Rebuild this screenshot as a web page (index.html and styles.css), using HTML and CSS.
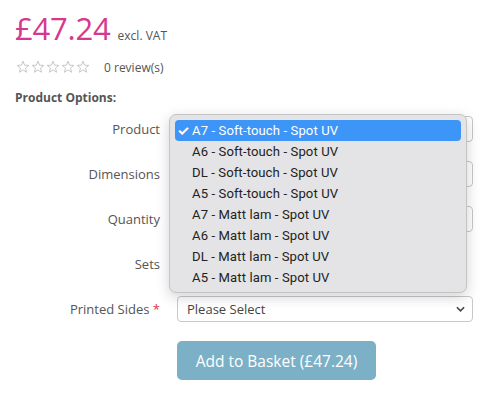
FILE: index.html
```html
<!DOCTYPE html>
<html>
<head>
<meta charset="utf-8">
<link rel="stylesheet" href="styles.css">
</head>
<body>
<div class="page">
  <div class="price-line">
    <span class="price">£47.24</span>
    <span class="vat">excl. VAT</span>
  </div>
  <div class="rating">
    <span class="stars">
      <svg viewBox="0 0 14 14" class="star"><path d="M7 1.2 8.6 5.2 12.8 5.4 9.5 8.1 10.6 12.3 7 9.9 3.4 12.3 4.5 8.1 1.2 5.4 5.4 5.2Z"/></svg>
      <svg viewBox="0 0 14 14" class="star"><path d="M7 1.2 8.6 5.2 12.8 5.4 9.5 8.1 10.6 12.3 7 9.9 3.4 12.3 4.5 8.1 1.2 5.4 5.4 5.2Z"/></svg>
      <svg viewBox="0 0 14 14" class="star"><path d="M7 1.2 8.6 5.2 12.8 5.4 9.5 8.1 10.6 12.3 7 9.9 3.4 12.3 4.5 8.1 1.2 5.4 5.4 5.2Z"/></svg>
      <svg viewBox="0 0 14 14" class="star"><path d="M7 1.2 8.6 5.2 12.8 5.4 9.5 8.1 10.6 12.3 7 9.9 3.4 12.3 4.5 8.1 1.2 5.4 5.4 5.2Z"/></svg>
      <svg viewBox="0 0 14 14" class="star"><path d="M7 1.2 8.6 5.2 12.8 5.4 9.5 8.1 10.6 12.3 7 9.9 3.4 12.3 4.5 8.1 1.2 5.4 5.4 5.2Z"/></svg>
    </span>
    <span class="reviews">0 review(s)</span>
  </div>
  <div class="options-title">Product Options:</div>
  <div class="form">
    <div class="row">
      <label class="label">Product</label>
      <div class="select"><span></span><svg class="chev" viewBox="0 0 10 6"><path d="M1 1 5 5 9 1"/></svg></div>
    </div>
    <div class="row">
      <label class="label">Dimensions</label>
      <div class="select"><span></span><svg class="chev" viewBox="0 0 10 6"><path d="M1 1 5 5 9 1"/></svg></div>
    </div>
    <div class="row">
      <label class="label">Quantity</label>
      <div class="select"><span></span><svg class="chev" viewBox="0 0 10 6"><path d="M1 1 5 5 9 1"/></svg></div>
    </div>
    <div class="row">
      <label class="label">Sets</label>
      <div class="input-small"></div>
    </div>
    <div class="row">
      <label class="label">Printed Sides <span class="req">*</span></label>
      <div class="select"><span>Please Select</span><svg class="chev" viewBox="0 0 10 6"><path d="M1 1 5 5 9 1"/></svg></div>
    </div>
    <div class="row button-row">
      <span></span>
      <button class="basket">Add to Basket (£47.24)</button>
    </div>
    <div class="popup">
      <div class="opt selected"><span class="check">✓</span>A7 - Soft-touch - Spot UV</div>
      <div class="opt"><span class="check"></span>A6 - Soft-touch - Spot UV</div>
      <div class="opt"><span class="check"></span>DL - Soft-touch - Spot UV</div>
      <div class="opt"><span class="check"></span>A5 - Soft-touch - Spot UV</div>
      <div class="opt"><span class="check"></span>A7 - Matt lam - Spot UV</div>
      <div class="opt"><span class="check"></span>A6 - Matt lam - Spot UV</div>
      <div class="opt"><span class="check"></span>DL - Matt lam - Spot UV</div>
      <div class="opt"><span class="check"></span>A5 - Matt lam - Spot UV</div>
    </div>
  </div>
</div>
</body>
</html>
```
FILE: styles.css
```css
* { box-sizing: border-box; }
html, body { margin: 0; padding: 0; background: #fff; }
body {
  font-family: "Open Sans", "Liberation Sans", sans-serif;
  color: #555;
  font-size: 13px;
}
.page {
  width: 492px;
  height: 402px;
  padding: 8px 19px 0 15px;
  position: relative;
}
.price-line {
  display: flex;
  align-items: baseline;
  height: 40px;
}
.price {
  font-size: 31px;
  color: #d6388f;
  line-height: 40px;
  letter-spacing: -0.2px;
}
.vat {
  margin-left: 7px;
  font-size: 12px;
  color: #555;
}
.rating {
  display: flex;
  align-items: center;
  margin-top: 10px;
  height: 18px;
}
.stars { display: flex; gap: 1px; margin-left: 1px; }
.star {
  width: 14px;
  height: 14px;
  fill: none;
  stroke: #c8c8c8;
  stroke-width: 1;
}
.reviews {
  margin-left: 14px;
  font-size: 12px;
  color: #555;
}
.options-title {
  margin-top: 13px;
  font-size: 12px;
  font-weight: 700;
  color: #555;
  height: 18px;
  line-height: 18px;
}
.form {
  margin-top: 9px;
  position: relative;
}
.row {
  display: grid;
  grid-template-columns: 162px 296px;
  align-items: center;
  height: 26px;
  margin-bottom: 19px;
}
.label {
  text-align: right;
  padding-right: 17px;
  font-size: 13px;
  color: #555;
}
.req { color: #d9363e; }
.select {
  height: 26px;
  border: 1px solid #c8c8c8;
  border-radius: 4px;
  background: #fff;
  display: flex;
  align-items: center;
  justify-content: space-between;
  padding: 0 7px 0 9px;
  font-size: 13px;
  color: #444;
}
.chev {
  width: 9px;
  height: 6px;
  fill: none;
  stroke: #444;
  stroke-width: 1.8;
}
.input-small {
  width: 60px;
  height: 26px;
  border: 1px solid #c8c8c8;
  border-radius: 4px;
}
.button-row {
  height: 39px;
  margin-top: 0;
}
.basket {
  width: 199px;
  height: 39px;
  border: none;
  border-radius: 5px;
  background: #7bb0c7;
  color: #fff;
  font-family: "Open Sans", "Liberation Sans", sans-serif;
  font-size: 15.5px;
  padding: 0;
}
.popup {
  position: absolute;
  left: 154px;
  top: -2px;
  width: 298px;
  height: 179px;
  background: #e4e4e6;
  border: 1px solid #c4c4c6;
  border-radius: 7px;
  box-shadow: 0 4px 14px rgba(0,0,0,0.18);
  padding: 5px 5px;
  font-family: "Roboto", "Inter", sans-serif;
  font-size: 13.1px;
  letter-spacing: 0.1px;
  color: #222;
}
.opt {
  height: 21px;
  display: flex;
  align-items: center;
  border-radius: 4px;
}
.check {
  width: 17px;
  padding-left: 2px;
  font-size: 14px;
  font-weight: 700;
}
.opt.selected {
  background: #3d95f8;
  color: #fff;
}
```
